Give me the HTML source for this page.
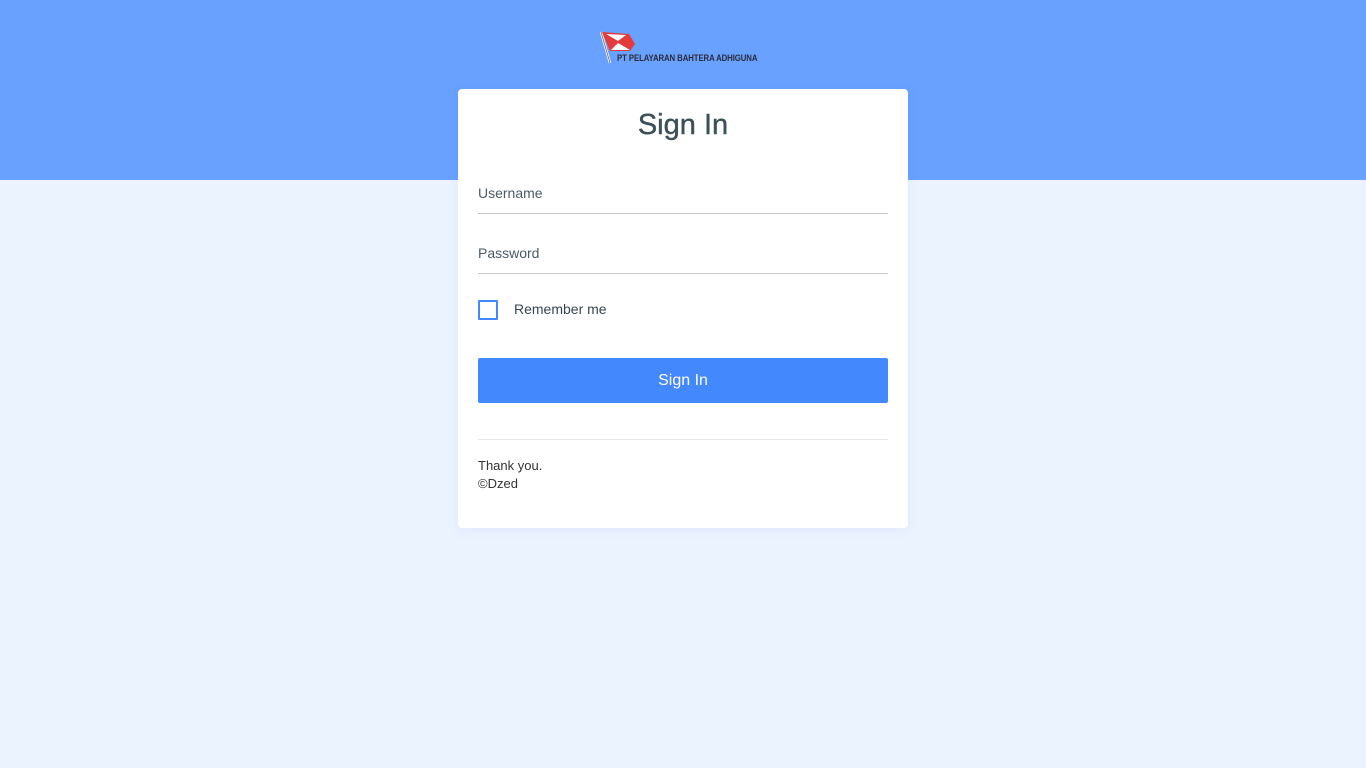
<!DOCTYPE html>
<html><head><meta charset="utf-8"><style>
html,body{margin:0;padding:0;width:1366px;height:768px;overflow:hidden;background:#ebf3fe;font-family:"Liberation Sans",sans-serif;}
.top{position:absolute;left:0;top:0;width:1366px;height:180px;background:#68a1ff;}
.logo{position:absolute;left:599px;top:29px;}
.logotxt{position:absolute;left:617px;top:53px;font-size:9px;font-weight:bold;color:#2b2b3a;letter-spacing:-0.1px;transform:scaleX(0.865);transform-origin:left;white-space:nowrap;}
.card{position:absolute;left:458px;top:89px;width:450px;height:439px;background:#fff;border-radius:4px;box-shadow:0 2px 12px rgba(80,120,200,0.08);}
h1{margin:0;position:absolute;top:20px;width:100%;text-align:center;font-size:29px;font-weight:normal;-webkit-text-stroke:0.4px #3c5058;color:#3c5058;}
.field{position:absolute;left:20px;width:410px;border-bottom:1px solid #c8c8c8;font-size:14px;color:#4a5a62;height:28px;}
.cb{position:absolute;left:20px;top:211px;width:16px;height:16px;border:2px solid #4289fc;border-radius:1px;}
.rm{position:absolute;left:56px;top:212px;font-size:14px;color:#3a474e;}
.btn{position:absolute;left:20px;top:269px;width:410px;height:45px;background:#4388fd;border-radius:2px;color:#fff;font-size:16px;text-align:center;line-height:45px;}
.hr{position:absolute;left:20px;top:350px;width:410px;border-top:1px solid #e6e6e6;}
.ft{position:absolute;left:20px;top:368px;font-size:13px;color:#333;line-height:18px;}
</style></head><body>
<div class="top"></div>
<svg class="logo" width="40" height="36" viewBox="0 0 40 36">
<line x1="2" y1="3" x2="11" y2="34" stroke="#eee" stroke-width="2.5"/>
<line x1="2" y1="3" x2="11" y2="34" stroke="#555" stroke-width="0.6"/>
<polygon points="3,3 30,5 36,15 31,22 11,22" fill="#e53a3a"/>
<polygon points="7,5 27,6 19,12" fill="#fff"/>
<polygon points="19,14 31,21 12,21" fill="#fff"/>
</svg>
<div class="logotxt">PT PELAYARAN BAHTERA ADHIGUNA</div>
<div class="card">
<h1>Sign In</h1>
<div class="field" style="top:96px">Username</div>
<div class="field" style="top:156px">Password</div>
<div class="cb"></div><div class="rm">Remember me</div>
<div class="btn">Sign In</div>
<div class="hr"></div>
<div class="ft">Thank you.<br>©Dzed</div>
</div>
</body></html>
